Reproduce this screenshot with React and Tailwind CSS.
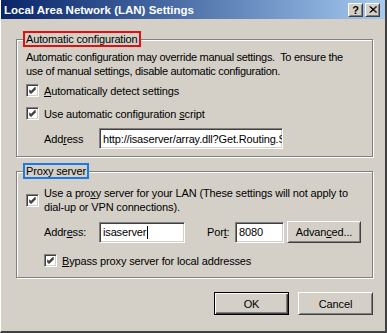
import React from 'react'

const sunken =
  'border border-t-[#808080] border-l-[#808080] border-r-white border-b-white bg-white shadow-[inset_1px_1px_0_#404040,inset_-1px_-1px_0_#d4d0c8]'
const raised =
  'border border-t-white border-l-white border-r-[#404040] border-b-[#404040] bg-[#d4d0c8] shadow-[inset_1px_1px_0_#d4d0c8,inset_-1px_-1px_0_#808080]'

function Check() {
  return (
    <span className={`w-[13px] h-[13px] shrink-0 flex items-center justify-center ${sunken}`}>
      <svg width="7" height="7" viewBox="0 0 7 7">
        <path d="M0 2.5 L2 4.5 L6.5 0 M0 3.5 L2 5.5 L6.5 1 M0 4.5 L2 6.5 L6.5 2" stroke="#000" strokeWidth="1" fill="none" />
      </svg>
    </span>
  )
}

function Field({ children, className = '' }) {
  return (
    <div className={`h-[21px] px-[3px] flex items-center overflow-hidden whitespace-nowrap ${sunken} ${className}`}>
      {children}
    </div>
  )
}

export default function App() {
  return (
    <div className="w-[387px] h-[333px] bg-[#d4d0c8] border-l border-l-white border-r-2 border-r-[#404040] border-b-2 border-b-[#404040] font-['Liberation_Sans',Arial,sans-serif] text-[11px] tracking-[-0.15px] text-black leading-[14px] flex flex-col">
      {/* Title bar */}
      <div className="h-[19px] shrink-0 bg-linear-to-r from-[#0a246a] to-[#a6caf0] flex items-center pl-[3px] pr-[5px]">
        <span className="text-white font-bold text-[11.5px] tracking-normal">Local Area Network (LAN) Settings</span>
        <div className="ml-auto flex gap-[2px]">
          <span className={`w-[15px] h-[14px] flex items-center justify-center font-bold text-[11px] ${raised}`}>?</span>
          <span className={`w-[15px] h-[14px] flex items-center justify-center ${raised}`}>
            <svg width="8" height="7" viewBox="0 0 8 7">
              <path d="M0.5 0.5 L7 6.5 M1.5 0.5 L8 6.5 M7 0.5 L0.5 6.5 M8 0.5 L1.5 6.5" stroke="#000" strokeWidth="1" fill="none" />
            </svg>
          </span>
        </div>
      </div>

      {/* Automatic configuration */}
      <fieldset className="ml-[15px] mt-[12px] w-[357px] border border-[#808080] shadow-[1px_1px_0_#fff,inset_1px_1px_0_#fff] pb-[7px]">
        <legend className="ml-[6px] px-[1px] border-2 border-[#e01010] bg-[#d4d0c8] leading-[12px]">Automatic configuration</legend>
        <div className="px-[9px] pt-[3px]">
          <p className="whitespace-nowrap tracking-[-0.3px]">
            Automatic configuration may override manual settings.&nbsp; To ensure the
            <br />
            use of manual settings, disable automatic configuration.
          </p>
          <label className="mt-[5px] h-[15px] flex items-center gap-[5px]">
            <Check />
            <span><u>A</u>utomatically detect settings</span>
          </label>
          <label className="mt-[8px] h-[15px] flex items-center gap-[5px]">
            <Check />
            <span>Use automatic configuration <u>s</u>cript</span>
          </label>
          <div className="mt-[7px] flex items-center pl-[18px]">
            <span className="w-[55px]">Add<u>r</u>ess</span>
            <Field className="w-[184px]">http://isaserver/array.dll?Get.Routing.Script</Field>
          </div>
        </div>
      </fieldset>

      {/* Proxy server */}
      <fieldset className="ml-[15px] mt-[6px] w-[357px] border border-[#808080] shadow-[1px_1px_0_#fff,inset_1px_1px_0_#fff] pb-[9px]">
        <legend className="ml-[6px] px-[1px] border-2 border-[#1a7ae6] bg-[#d4d0c8] leading-[12px]">Proxy server</legend>
        <div className="px-[9px] pt-[7px]">
          <label className="flex items-center gap-[5px]">
            <Check />
            <span className="whitespace-nowrap">
              Use a pro<u>x</u>y server for your LAN (These settings will not apply to
              <br />
              dial-up or VPN connections).
            </span>
          </label>
          <div className="mt-[7px] flex items-center pl-[18px]">
            <span className="w-[55px]">Addr<u>e</u>ss:</span>
            <Field className="w-[86px]">
              isaserver<span className="inline-block w-px h-[13px] bg-black ml-[1px]" />
            </Field>
            <span className="ml-[22px] w-[28px]">Por<u>t</u>:</span>
            <Field className="w-[49px]">8080</Field>
            <button className={`ml-[3px] w-[74px] h-[22px] flex items-center justify-center ${raised}`}>
              Advan<u>c</u>ed...
            </button>
          </div>
          <label className="mt-[10px] h-[15px] flex items-center gap-[5px] pl-[18px]">
            <Check />
            <span><u>B</u>ypass proxy server for local addresses</span>
          </label>
        </div>
      </fieldset>

      {/* Buttons */}
      <div className="mt-[14px] flex justify-end gap-[9px] pr-[12px]">
        <button className="w-[75px] h-[23px] flex items-center justify-center bg-[#d4d0c8] border border-black shadow-[inset_1px_1px_0_#fff,inset_-1px_-1px_0_#404040,inset_-2px_-2px_0_#808080]">
          OK
        </button>
        <button className={`w-[75px] h-[23px] flex items-center justify-center ${raised}`}>Cancel</button>
      </div>
    </div>
  )
}
